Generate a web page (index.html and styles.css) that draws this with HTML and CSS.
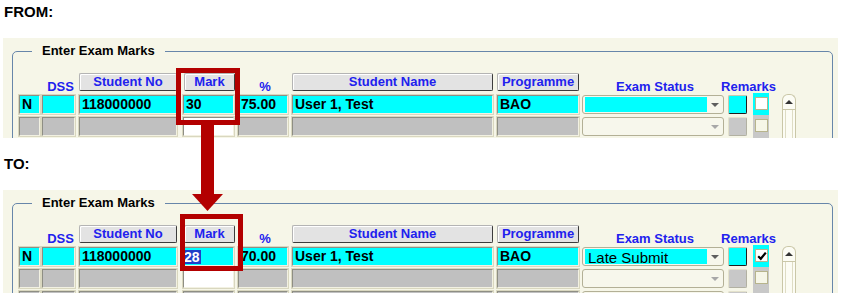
FILE: index.html
```html
<!DOCTYPE html>
<html lang="en">
<head>
    <meta charset="UTF-8">
    <title>Enter Exam Marks - FROM / TO</title>
    <link rel="stylesheet" href="styles.css">
</head>
<body>

<div class="page">

    <div class="caption">FROM:</div>
    <div class="panel">
        <fieldset class="group">
            <legend>Enter Exam Marks</legend>
            <div class="grid">
                <span></span>
                <span class="label">DSS</span>
                <div class="head-btn w-sn">Student No</div>
                <div class="head-btn w-mark">Mark</div>
                <span class="label">%</span>
                <div class="head-btn w-name">Student Name</div>
                <div class="head-btn w-prog">Programme</div>
                <span class="label">Exam Status</span>
                <span class="label span2">Remarks</span>
                <span></span>

                <div class="cell cyan w-n">N</div>
                <div class="cell cyan w-dss"></div>
                <div class="cell cyan w-sn">118000000</div>
                <div class="cell cyan w-mark">30</div>
                <div class="cell cyan w-pct">75.00</div>
                <div class="cell cyan w-name">User 1, Test</div>
                <div class="cell cyan w-prog">BAO</div>
                <div class="combo"><div class="combo-field cyan"></div><span class="combo-arrow"><i class="tri-down"></i></span></div>
                <div class="rem-box cyan"></div>
                <div class="chk-cell cyan"><span class="chk"></span></div>

                <div class="scroll"><div class="scroll-up"><i class="tri-up"></i></div><div class="scroll-track"></div></div>

                <div class="cell grey w-n"></div>
                <div class="cell grey w-dss"></div>
                <div class="cell grey w-sn"></div>
                <div class="cell white w-mark"></div>
                <div class="cell grey w-pct"></div>
                <div class="cell grey w-name"></div>
                <div class="cell grey w-prog"></div>
                <div class="combo"><div class="combo-field"></div><span class="combo-arrow"><i class="tri-down light"></i></span></div>
                <div class="rem-box grey"></div>
                <div class="chk-cell grey"><span class="chk off"></span></div>

                <div class="cell grey w-n"></div>
                <div class="cell grey w-dss"></div>
                <div class="cell grey w-sn"></div>
                <div class="cell grey w-mark"></div>
                <div class="cell grey w-pct"></div>
                <div class="cell grey w-name"></div>
                <div class="cell grey w-prog"></div>
                <div class="combo"><div class="combo-field"></div><span class="combo-arrow"><i class="tri-down light"></i></span></div>
                <div class="rem-box grey"></div>
                <div class="chk-cell grey"><span class="chk off"></span></div>
            </div>
        </fieldset>
    </div>

    <div class="caption caption-to">TO:</div>
    <div class="panel panel-to">
        <fieldset class="group">
            <legend>Enter Exam Marks</legend>
            <div class="grid">
                <span></span>
                <span class="label">DSS</span>
                <div class="head-btn w-sn">Student No</div>
                <div class="head-btn w-mark">Mark</div>
                <span class="label">%</span>
                <div class="head-btn w-name">Student Name</div>
                <div class="head-btn w-prog">Programme</div>
                <span class="label">Exam Status</span>
                <span class="label span2">Remarks</span>
                <span></span>

                <div class="cell cyan w-n">N</div>
                <div class="cell cyan w-dss"></div>
                <div class="cell cyan w-sn">118000000</div>
                <div class="cell cyan w-mark nopad"><span class="sel">28</span></div>
                <div class="cell cyan w-pct">70.00</div>
                <div class="cell cyan w-name">User 1, Test</div>
                <div class="cell cyan w-prog">BAO</div>
                <div class="combo"><div class="combo-field cyan">Late Submit</div><span class="combo-arrow"><i class="tri-down"></i></span></div>
                <div class="rem-box cyan"></div>
                <div class="chk-cell cyan">
                    <span class="chk">
                        <svg width="10" height="10" viewBox="0 0 10 10"><path d="M1.2 5.2 L3.8 7.8 L8.8 1.6" fill="none" stroke="#000" stroke-width="2.2"/></svg>
                    </span>
                </div>

                <div class="scroll"><div class="scroll-up"><i class="tri-up"></i></div><div class="scroll-track"></div></div>

                <div class="cell grey w-n"></div>
                <div class="cell grey w-dss"></div>
                <div class="cell grey w-sn"></div>
                <div class="cell white w-mark"></div>
                <div class="cell grey w-pct"></div>
                <div class="cell grey w-name"></div>
                <div class="cell grey w-prog"></div>
                <div class="combo"><div class="combo-field"></div><span class="combo-arrow"><i class="tri-down light"></i></span></div>
                <div class="rem-box grey"></div>
                <div class="chk-cell grey"><span class="chk off"></span></div>

                <div class="cell grey w-n"></div>
                <div class="cell grey w-dss"></div>
                <div class="cell grey w-sn"></div>
                <div class="cell grey w-mark"></div>
                <div class="cell grey w-pct"></div>
                <div class="cell grey w-name"></div>
                <div class="cell grey w-prog"></div>
                <div class="combo"><div class="combo-field"></div><span class="combo-arrow"><i class="tri-down light"></i></span></div>
                <div class="rem-box grey"></div>
                <div class="chk-cell grey"><span class="chk off"></span></div>
            </div>
        </fieldset>
    </div>

    <!-- red callouts over the Mark column -->
    <div class="callout callout-from"></div>
    <div class="arrow"><div class="arrow-shaft"></div><div class="arrow-head"></div></div>
    <div class="callout callout-to"></div>

</div>

</body>
</html>
```

FILE: styles.css
```css
* {
    margin: 0;
    padding: 0;
    box-sizing: border-box;
}
html, body {
    height: 100%;
    overflow: hidden;
}
body {
    font-family: "Liberation Sans", Arial, sans-serif;
    background-color: #fff;
    color: #000;
}
.page {
    position: relative;
}
.caption {
    height: 24px;
    margin-bottom: 14px;
    padding-left: 4px;
    font-size: 15px;
    font-weight: bold;
    line-height: 24px;
}
.caption-to {
    margin-top: 14px;
}
.panel {
    margin-left: 3px;
    width: 835px;
    height: 100px;
    padding-top: 6px;
    background-color: #f6f6e8;
    overflow: hidden;
}
.panel-to {
    height: 110px;
}
.group {
    margin-left: 9px;
    width: 821px;
    min-width: 0;
    padding: 15px 0 0 0;
    border: 1px solid #6786aa;
    border-radius: 5px;
}
.group legend {
    margin-left: 19px;
    padding: 0 10px;
    font-size: 13px;
    font-weight: bold;
    line-height: 14px;
}
.grid {
    display: grid;
    grid-template-columns: 23px 37px 104px 55px 54px 205px 85px 146px 25px 29px 14px;
    grid-template-rows: 19px 19px 19px 19px;
    row-gap: 3px;
    margin-left: 6px;
}

/* header */
.label {
    align-self: end;
    justify-self: center;
    margin-bottom: -1px;
    color: #2121ee;
    font-size: 13px;
    font-weight: bold;
    line-height: 13px;
    white-space: nowrap;
}
.span2 {
    grid-column: span 2;
    margin-right: 13px;
}
.head-btn {
    height: 18px;
    text-align: center;
    color: #2121ee;
    font-size: 13px;
    font-weight: bold;
    line-height: 16px;
    background-color: #e3e3e3;
    border: 1px solid;
    border-color: #b4b4b4 #3c3c3c #3c3c3c #b4b4b4;
    border-radius: 2px;
    box-shadow: inset 1px 1px #fff;
    white-space: nowrap;
    overflow: hidden;
}

/* cells */
.w-n { width: 21px; }
.w-dss { width: 33px; }
.w-sn { width: 98px; }
.w-mark { width: 51px; }
.w-pct { width: 50px; }
.w-name { width: 201px; }
.w-prog { width: 82px; }
.head-btn.w-mark { width: 51px; margin-left: 1px; }

.cell {
    height: 19px;
    padding-left: 2px;
    border: 1px solid;
    border-color: #8e8e84 #f2f1e2 #f2f1e2 #8e8e84;
    box-shadow: 0 0 0 1px #d9d7bf;
    font-size: 14px;
    font-weight: bold;
    line-height: 17px;
    white-space: nowrap;
    overflow: hidden;
}
.cell.nopad {
    padding-left: 0;
}
.cyan {
    background-color: #00ffff;
}
.grey {
    background-color: #c0c0c0;
}
.white {
    background-color: #fff;
}
.sel {
    display: inline-block;
    height: 14px;
    margin-top: 2px;
    padding: 0 1px 0 0;
    line-height: 14px;
    vertical-align: top;
    background-color: #1f3fc8;
    color: #fff;
}

/* exam status combo */
.combo {
    display: flex;
    width: 142px;
    height: 19px;
    padding: 1px 1px 1px 2px;
    background-color: #f7f7ec;
    border: 1px solid #b3b096;
    border-radius: 3px;
}
.combo-field {
    flex: 1;
    padding-left: 3px;
    font-size: 15px;
    line-height: 17px;
    white-space: nowrap;
}
.combo-arrow {
    width: 15px;
    display: flex;
    align-items: center;
    justify-content: center;
}
.tri-down {
    width: 0;
    height: 0;
    border-left: 4px solid transparent;
    border-right: 4px solid transparent;
    border-top: 4px solid #5e5e5e;
}
.tri-down.light {
    border-top-color: #a8a8a8;
}

/* remarks */
.rem-box {
    width: 19px;
    height: 19px;
    border: 1px solid;
    border-radius: 2px;
}
.rem-box.cyan {
    border-color: #c9c7ae #1e1e1e #1e1e1e #c9c7ae;
}
.rem-box.grey {
    background-color: #c8c8c8;
    border-color: #e4e2cc #b2b1a2 #b2b1a2 #e4e2cc;
}
.chk-cell {
    width: 16px;
    margin: -2px 0 -1px 0;
    padding: 4px 0 0 2px;
}
.chk-cell.grey {
    background-color: #c8c8c8;
}
.chk {
    display: flex;
    align-items: center;
    justify-content: center;
    width: 13px;
    height: 13px;
    background-color: #fff;
    border: 1px solid #b7b48c;
}
.chk.off {
    background-color: #f6f6e8;
}

/* scrollbar */
.scroll {
    grid-column: 11;
    grid-row: 2 / span 3;
    display: flex;
    flex-direction: column;
    width: 14px;
    margin-top: -1px;
    margin-bottom: -3px;
    background-color: #fcfcf4;
    border: 1px solid #cac7a8;
    border-bottom: none;
    border-radius: 6px 6px 0 0;
}
.scroll-up {
    height: 15px;
    display: flex;
    align-items: center;
    justify-content: center;
    border-bottom: 1px solid #cac7a8;
}
.tri-up {
    width: 0;
    height: 0;
    border-left: 4px solid transparent;
    border-right: 4px solid transparent;
    border-bottom: 4px solid #333;
}
.scroll-track {
    flex: 1;
    margin: 0 2px;
    border-left: 1px solid #dedcc4;
    border-right: 1px solid #dedcc4;
}

/* red callouts */
.callout {
    position: absolute;
    border: 5px solid #b30000;
}
.callout-from {
    left: 176px;
    top: 68px;
    width: 64px;
    height: 57px;
}
.callout-to {
    left: 180px;
    top: 214px;
    width: 63px;
    height: 57px;
}
.arrow {
    position: absolute;
    left: 192px;
    top: 124px;
    width: 31px;
    display: flex;
    flex-direction: column;
    align-items: center;
}
.arrow-shaft {
    width: 13px;
    height: 70px;
    background-color: #b30000;
}
.arrow-head {
    width: 31px;
    height: 17px;
    background-color: #b30000;
    clip-path: polygon(0 0, 100% 0, 50% 100%);
}
```
